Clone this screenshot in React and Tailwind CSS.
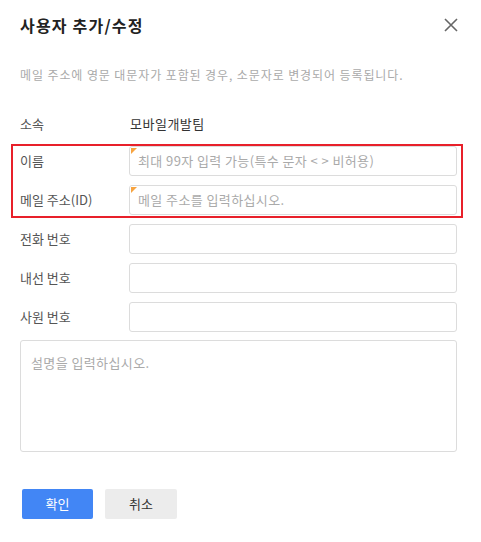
export default function App() {
  const rows = [
    { label: '이름', placeholder: '최대 99자 입력 가능(특수 문자 < > 비허용)', required: true },
    { label: '메일 주소(ID)', placeholder: '메일 주소를 입력하십시오.', required: true },
    { label: '전화 번호', placeholder: '' },
    { label: '내선 번호', placeholder: '' },
    { label: '사원 번호', placeholder: '' },
  ];

  return (
    <div
      className="w-[481px] h-[542px] bg-white text-[#333] relative"
      style={{ fontFamily: '"Noto Sans CJK KR", "Noto Sans", sans-serif' }}
    >
      <div className="flex items-center justify-between pl-5 pr-[22px] pt-[12px] h-[38px]">
        <h1 className="text-[16px] font-semibold text-[#222] leading-none tracking-[1.2px]">사용자 추가/수정</h1>
        <svg width="16" height="16" viewBox="0 0 16 16" className="text-[#666]">
          <path d="M2 2L14 14M14 2L2 14" stroke="currentColor" strokeWidth="1.6" />
        </svg>
      </div>

      <p className="px-5 mt-[29px] text-[12px] text-[#aaa] leading-[16px] tracking-[0.9px]">
        메일 주소에 영문 대문자가 포함된 경우, 소문자로 변경되어 등록됩니다.
      </p>

      <div className="flex items-center px-5 mt-[32px] h-[18px] text-[13px]">
        <span className="w-[110px] text-[#555]">소속</span>
        <span className="text-[#333] tracking-[0.5px]">모바일개발팀</span>
      </div>

      <div className="relative mt-[13px] mx-5 pr-[4px] flex flex-col gap-[9px]">
        {rows.map((r, i) => (
          <div key={i} className="flex items-center h-[30px]">
            <span className="w-[109px] text-[13px] text-[#555]">{r.label}</span>
            <div className="relative flex-1 h-full border border-[#dcdcdc] rounded-[3px] flex items-center px-2">
              {r.required && (
                <span className="absolute left-[1px] top-[1px] w-0 h-0 border-t-[6px] border-t-[#f7a440] border-r-[6px] border-r-transparent" />
              )}
              <span className="text-[13px] text-[#aaa] tracking-[0.4px]">{r.placeholder}</span>
            </div>
          </div>
        ))}
        <div className="absolute left-[-9px] top-[-2px] w-[452px] h-[74px] border-2 border-[#e8202a] pointer-events-none" />
      </div>

      <div className="mx-5 mr-[24px] mt-[8px] h-[112px] border border-[#dcdcdc] rounded-[3px] px-[10px] pt-[8px]">
        <span className="text-[13px] text-[#aaa] tracking-[0.4px]">설명을 입력하십시오.</span>
      </div>

      <div className="flex gap-[12px] pl-[22px] mt-[37px]">
        <button className="w-[71px] h-[30px] bg-[#4286f5] rounded-[2px] text-white text-[13px]">확인</button>
        <button className="w-[72px] h-[30px] bg-[#ececec] rounded-[2px] text-[#333] text-[13px]">취소</button>
      </div>
    </div>
  );
}
